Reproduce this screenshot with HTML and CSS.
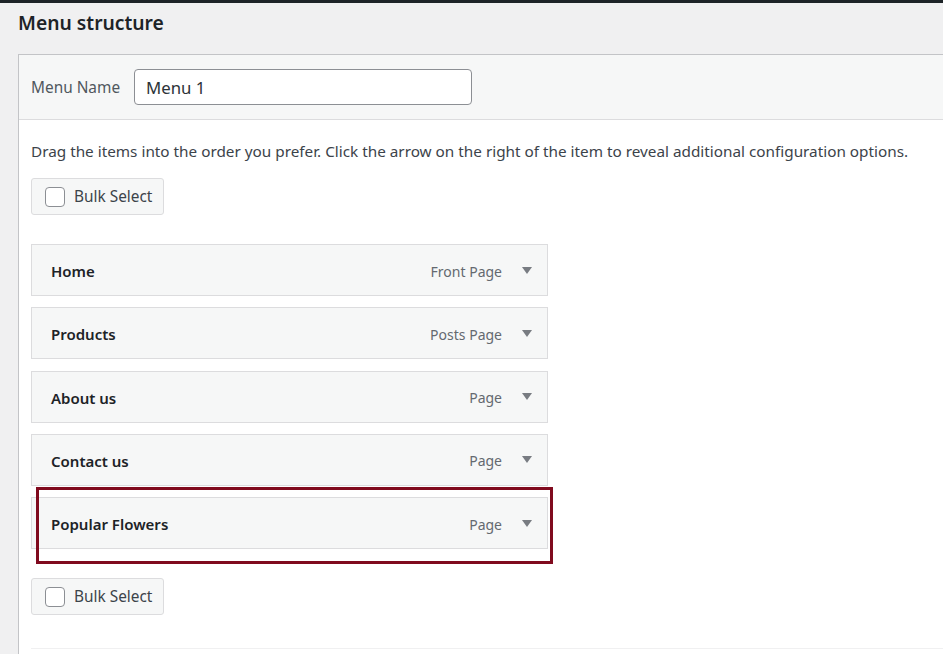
FILE: index.html
```html
<!DOCTYPE html>
<html>
<head>
<meta charset="utf-8">
<link rel="stylesheet" href="styles.css">
</head>
<body>
<div class="page">
  <h2 class="title">Menu structure</h2>
  <div class="panel">
    <div class="panel-head">
      <label class="name-label">Menu Name</label>
      <div class="name-input">Menu 1</div>
    </div>
    <div class="panel-body">
      <p class="hint">Drag the items into the order you prefer. Click the arrow on the right of the item to reveal additional configuration options.</p>
      <div class="bulk"><span class="check"></span><span>Bulk Select</span></div>
      <ul class="items">
        <li class="item"><span class="item-title">Home</span><span class="item-meta"><span class="item-type">Front Page</span><span class="arrow"></span></span></li>
        <li class="item"><span class="item-title">Products</span><span class="item-meta"><span class="item-type">Posts Page</span><span class="arrow"></span></span></li>
        <li class="item"><span class="item-title">About us</span><span class="item-meta"><span class="item-type">Page</span><span class="arrow"></span></span></li>
        <li class="item"><span class="item-title">Contact us</span><span class="item-meta"><span class="item-type">Page</span><span class="arrow"></span></span></li>
        <li class="item highlighted"><span class="item-title">Popular Flowers</span><span class="item-meta"><span class="item-type">Page</span><span class="arrow"></span></span><span class="highlight-box"></span></li>
      </ul>
      <div class="bulk bulk-bottom"><span class="check"></span><span>Bulk Select</span></div>
      <div class="footer-line"></div>
    </div>
  </div>
</div>
</body>
</html>
```
FILE: styles.css
```css
* { box-sizing: border-box; }
html, body { margin: 0; padding: 0; background: #ffffff; }
body { font-family: "Noto Sans", "Open Sans", sans-serif; color: #3c434a; }
.page {
  width: 943px;
  height: 654px;
  background: #f0f0f1;
  border-top: 3px solid #1d2327;
  overflow: hidden;
}
.title {
  margin: 0;
  padding: 7px 0 0 18px;
  height: 51px;
  font-size: 19.3px;
  line-height: 26px;
  font-weight: 600;
  color: #1d2327;
}
.panel {
  margin-left: 18px;
  border-top: 1px solid #c3c4c7;
  border-left: 1px solid #c3c4c7;
  background: #fff;
  height: 700px;
}
.panel-head {
  height: 65px;
  background: #f6f7f7;
  border-bottom: 1px solid #dcdcde;
  display: flex;
  align-items: center;
  padding-left: 12px;
}
.name-label {
  font-size: 15.4px;
  color: #50575e;
  width: 103px;
}
.name-input {
  width: 338px;
  height: 36px;
  border: 1px solid #8c8f94;
  border-radius: 4px;
  background: #fff;
  font-size: 16.8px;
  line-height: 35px;
  padding-left: 11px;
  color: #2c3338;
}
.panel-body { padding: 0 0 0 12px; }
.hint {
  margin: 21px 0 0;
  font-size: 15.3px;
  line-height: 20px;
  color: #3c434a;
  white-space: nowrap;
}
.bulk {
  margin-top: 17px;
  width: 133px;
  height: 37px;
  background: #f6f7f7;
  border: 1px solid #dcdcde;
  border-radius: 3px;
  display: flex;
  align-items: center;
  padding-left: 13px;
  font-size: 15.4px;
  color: #3c434a;
  gap: 9px;
}
.check {
  width: 20px;
  height: 20px;
  border: 1px solid #8c8f94;
  border-radius: 4px;
  background: #fff;
}
.items {
  list-style: none;
  margin: 29px 0 0;
  padding: 0;
}
.item {
  position: relative;
  width: 517px;
  height: 52px;
  margin-bottom: 11.25px;
  background: #f6f7f7;
  border: 1px solid #dcdcde;
  display: flex;
  align-items: center;
  justify-content: space-between;
  padding: 2px 15px 0 19px;
}
.item:last-child { margin-bottom: 0; }
.item-title {
  font-size: 15px;
  font-weight: 600;
  color: #1d2327;
}
.item-meta {
  display: flex;
  align-items: center;
  gap: 20px;
}
.item-type {
  font-size: 14px;
  color: #646970;
}
.arrow {
  width: 0;
  height: 0;
  border-left: 5px solid transparent;
  border-right: 5px solid transparent;
  border-top: 7px solid #787c82;
  margin-top: -2px;
}
.highlight-box {
  position: absolute;
  top: -11px;
  left: 4px;
  width: 517px;
  height: 77px;
  border: 3px solid #800a1e;
}
.bulk-bottom { margin-top: 29px; }
.footer-line {
  margin-top: 33px;
  border-top: 1px solid #f0f0f1;
}
```
